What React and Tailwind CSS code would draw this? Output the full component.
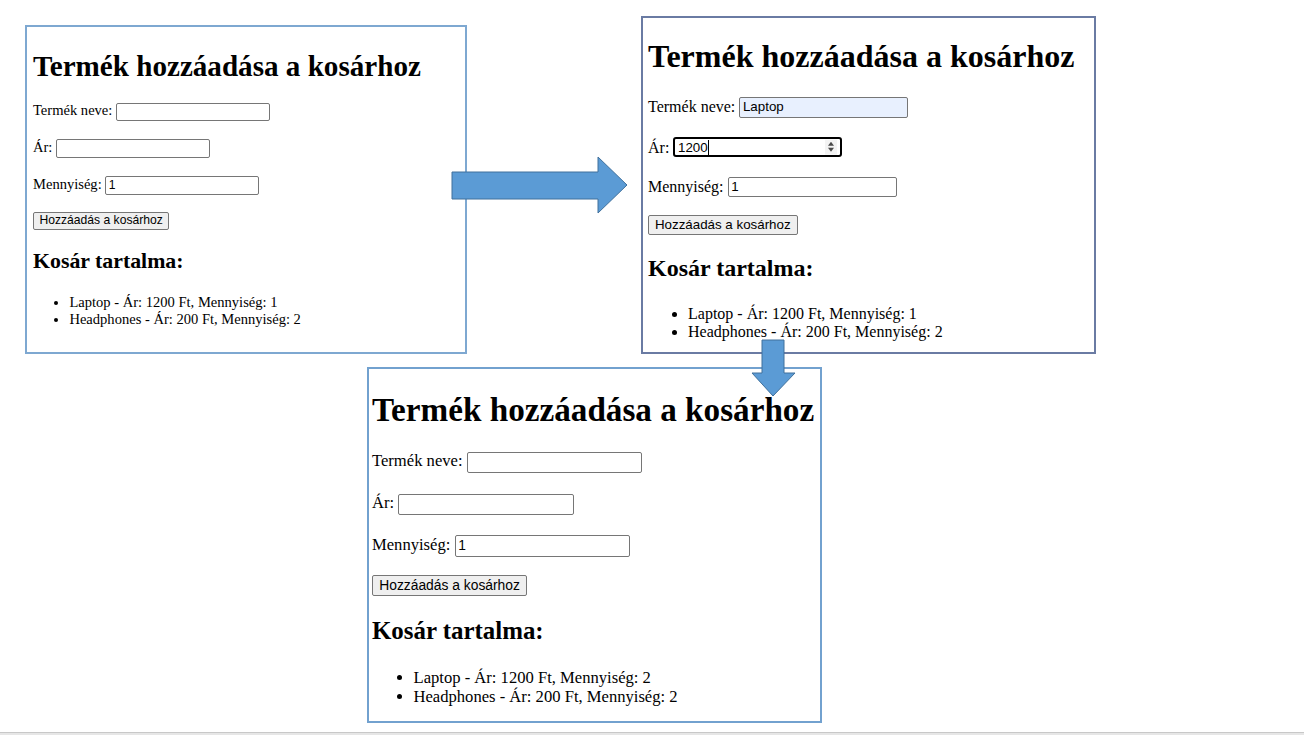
import clsx from 'clsx';

const serif = "font-['Liberation_Serif','Times_New_Roman',serif]";
const sans = "font-['Liberation_Sans',Arial,sans-serif]";

function Field({ value, autofill, focused }) {
  return (
    <span
      className={clsx(
        sans,
        'relative inline-block align-baseline w-[12.68em] h-[1.55em] text-[0.8333em] leading-[1.15] px-[0.2em] py-[0.12em] text-black',
        focused ? 'border-2 border-black rounded-[3px]' : 'border border-[#767676] rounded-[2px]',
        autofill ? 'bg-[#e8f0fe]' : 'bg-white'
      )}
    >
      {value || '\u00a0'}
      {focused && <span className="inline-block w-px h-[1.1em] bg-black align-[-0.2em]" />}
      {focused && (
        <span className="absolute right-[0.25em] top-1/2 -translate-y-1/2 flex items-center justify-center w-[0.9em] h-[1.1em] bg-[#f3f3f3]">
          <svg viewBox="0 0 8 12" className="w-[0.6em] h-[0.9em]">
            <path d="M4 1 L7 5 L1 5 Z" fill="#4a4a4a" />
            <path d="M4 11 L7 7 L1 7 Z" fill="#4a4a4a" />
          </svg>
        </span>
      )}
    </span>
  );
}

function Panel({ className, innerClass, name, price, qty, items }) {
  return (
    <div className={clsx('absolute overflow-hidden bg-white border-2 text-black', serif, className)}>
      <div className={innerClass}>
        <h1 className="text-[2em] font-bold leading-[normal] my-[0.67em] whitespace-nowrap">
          Termék hozzáadása a kosárhoz
        </h1>
        <p className="my-[1.2em] leading-[normal] whitespace-nowrap">
          Termék neve: <Field value={name.value} autofill={name.autofill} />
        </p>
        <p className="my-[1.2em] leading-[normal] whitespace-nowrap">
          Ár: <Field value={price.value} focused={price.focused} />
        </p>
        <p className="mt-[1.2em] mb-[1.1em] leading-[normal] whitespace-nowrap">
          Mennyiség: <Field value={qty} />
        </p>
        <div className="mt-[1.1em] leading-[normal]">
          <button
            className={clsx(
              sans,
              'text-[0.8333em] leading-[1.15] px-[0.45em] py-[0.12em] bg-[#efefef] border border-[#767676] rounded-[2px] text-black whitespace-nowrap'
            )}
          >
            Hozzáadás a kosárhoz
          </button>
        </div>
        <h2 className="text-[1.5em] font-bold leading-[normal] mt-[0.83em] mb-0">Kosár tartalma:</h2>
        <ul className="list-disc pl-[2.5em] mt-[1.4em] mb-[1em] leading-[1.15]">
          {items.map((item) => (
            <li key={item} className="whitespace-nowrap">{item}</li>
          ))}
        </ul>
      </div>
    </div>
  );
}

export default function App() {
  return (
    <div className="w-full bg-white">
      <div className="relative h-[732px]">
        <Panel
          className="left-[25px] top-[25px] w-[442px] h-[329px] border-[#7ea8d1] text-[14.56px] pl-[6px] pt-[3px]"
          innerClass=""
          name={{ value: '' }}
          price={{ value: '' }}
          qty="1"
          items={['Laptop - Ár: 1200 Ft, Mennyiség: 1', 'Headphones - Ár: 200 Ft, Mennyiség: 2']}
        />
        <Panel
          className="left-[641px] top-[16px] w-[455px] h-[338px] border-[#6a7ba3] text-[16px] pl-[5px]"
          innerClass="-mt-[1px]"
          name={{ value: 'Laptop', autofill: true }}
          price={{ value: '1200', focused: true }}
          qty="1"
          items={['Laptop - Ár: 1200 Ft, Mennyiség: 1', 'Headphones - Ár: 200 Ft, Mennyiség: 2']}
        />
        <Panel
          className="left-[367px] top-[367px] w-[455px] h-[356px] border-[#72a1cf] text-[16.6px] pl-[3px]"
          innerClass=""
          name={{ value: '' }}
          price={{ value: '' }}
          qty="1"
          items={['Laptop - Ár: 1200 Ft, Mennyiség: 2', 'Headphones - Ár: 200 Ft, Mennyiség: 2']}
        />

        {/* right arrow */}
        <svg className="absolute left-[451px] top-[156px] w-[178px] h-[58px]" viewBox="0 0 178 58">
          <polygon points="1,16 147,16 147,1 176,29 147,57 147,43 1,43" fill="#5b9bd5" stroke="#41719c" strokeWidth="1" />
        </svg>
        {/* down arrow */}
        <svg className="absolute left-[750px] top-[339px] w-[47px] h-[59px]" viewBox="0 0 47 59">
          <polygon points="12,1 34,1 34,34 45,34 23,57 2,34 12,34" fill="#5b9bd5" stroke="#41719c" strokeWidth="1" />
        </svg>
      </div>
      <div className="h-[3px] border-t border-[#c8c8c8] bg-[#e6e6e6]" />
    </div>
  );
}
